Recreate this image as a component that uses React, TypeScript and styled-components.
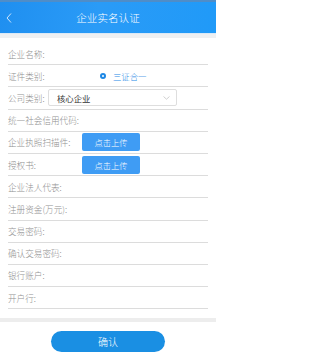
import React from 'react';
import styled, { createGlobalStyle } from 'styled-components';

const GlobalStyle = createGlobalStyle`
  html, body {
    margin: 0;
    padding: 0;
    background: #ffffff;
  }
  body {
    font-family: "Noto Sans CJK SC", "Noto Sans", sans-serif;
  }
`;

const Page = styled.div`
  width: 216px;
  height: 360px;
  display: flex;
  flex-direction: column;
  background: #ffffff;
  overflow: hidden;
`;

const Header = styled.div`
  position: relative;
  height: 33px;
  flex-shrink: 0;
  display: flex;
  align-items: center;
  justify-content: center;
  border-top: 2px solid #4f8dc8;
  box-sizing: border-box;
  background: linear-gradient(100deg, #1f8ff0 0%, #2a9bf7 45%, #209af8 100%);
`;

const BackButton = styled.div`
  position: absolute;
  left: 5px;
  top: 50%;
  transform: translateY(-50%);
  display: flex;
`;

const Title = styled.div`
  color: #ffffff;
  font-size: 10.5px;
  font-weight: 300;
  letter-spacing: 0.1px;
`;

const Gap = styled.div`
  height: 4px;
  flex-shrink: 0;
  background: #eef0f2;
  border-top: 1px solid #dbe9f6;
`;

const Form = styled.div`
  padding: 5px 8px 0;
  display: flex;
  flex-direction: column;
`;

const Row = styled.div`
  height: 21.2px;
  display: flex;
  align-items: center;
  border-bottom: 1px solid #dcdcdc;
`;

const Label = styled.div<{ $width?: number }>`
  font-size: 8.6px;
  font-weight: 300;
  color: #909090;
  white-space: nowrap;
  width: ${(p) => (p.$width ? `${p.$width}px` : 'auto')};
  flex-shrink: 0;
`;

const RadioWrap = styled.div`
  display: flex;
  align-items: center;
  margin-left: 52px;
  gap: 7px;
`;

const RadioDot = styled.span`
  width: 6px;
  height: 6px;
  border-radius: 50%;
  background: #1e88e5;
  display: flex;
  align-items: center;
  justify-content: center;
  &::after {
    content: '';
    width: 2px;
    height: 2px;
    border-radius: 50%;
    background: #ffffff;
  }
`;

const RadioText = styled.span`
  font-size: 8.4px;
  font-weight: 300;
  color: #2b8ae6;
`;

const Select = styled.div`
  margin-left: 3px;
  width: 129px;
  height: 17px;
  box-sizing: border-box;
  border: 1px solid #dedede;
  border-radius: 2px;
  display: flex;
  align-items: center;
  justify-content: space-between;
  padding: 0 6px 0 8px;
`;

const SelectValue = styled.span`
  font-size: 8.4px;
  color: #333333;
`;

const UploadButton = styled.div`
  width: 58px;
  height: 18px;
  border-radius: 2px;
  background: #3f9cf4;
  color: #ffffff;
  font-size: 8.3px;
  font-weight: 300;
  display: flex;
  align-items: center;
  justify-content: center;
`;

const Spacer = styled.div`
  flex: 1;
`;

const Divider = styled.div`
  height: 4px;
  background: #ededed;
  margin-top: 9px;
`;

const Footer = styled.div`
  display: flex;
  justify-content: center;
  padding-top: 9px;
`;

const ConfirmButton = styled.div`
  width: 114px;
  height: 21px;
  border-radius: 11px;
  background: #1a8fe3;
  color: #ffffff;
  font-size: 10px;
  font-weight: 300;
  display: flex;
  align-items: center;
  justify-content: center;
`;

const plainRows = [
  '企业法人代表:',
  '注册资金(万元):',
  '交易密码:',
  '确认交易密码:',
  '银行账户:',
  '开户行:',
];

export default function App() {
  return (
    <>
      <GlobalStyle />
      <Page>
        <Header>
          <BackButton>
            <svg width="8" height="12" viewBox="0 0 8 12" fill="none">
              <path d="M6 1.5L2 6l4 4.5" stroke="#cfe6fb" strokeWidth="1" />
            </svg>
          </BackButton>
          <Title>企业实名认证</Title>
        </Header>
        <Gap />
        <Form>
          <Row>
            <Label>企业名称:</Label>
          </Row>
          <Row>
            <Label $width={40}>证件类别:</Label>
            <RadioWrap>
              <RadioDot />
              <RadioText>三证合一</RadioText>
            </RadioWrap>
          </Row>
          <Row>
            <Label $width={37}>公司类别:</Label>
            <Select>
              <SelectValue>核心企业</SelectValue>
              <svg width="7" height="4" viewBox="0 0 7 4" fill="none">
                <path d="M0.5 0.5L3.5 3.2L6.5 0.5" stroke="#c4c4c4" strokeWidth="0.8" />
              </svg>
            </Select>
          </Row>
          <Row>
            <Label>统一社会信用代码:</Label>
          </Row>
          <Row>
            <Label $width={74}>企业执照扫描件:</Label>
            <UploadButton>点击上传</UploadButton>
          </Row>
          <Row>
            <Label $width={74}>授权书:</Label>
            <UploadButton>点击上传</UploadButton>
          </Row>
          {plainRows.map((label) => (
            <Row key={label}>
              <Label>{label}</Label>
            </Row>
          ))}
        </Form>
        <Divider />
        <Footer>
          <ConfirmButton>确认</ConfirmButton>
        </Footer>
        <Spacer />
      </Page>
    </>
  );
}
